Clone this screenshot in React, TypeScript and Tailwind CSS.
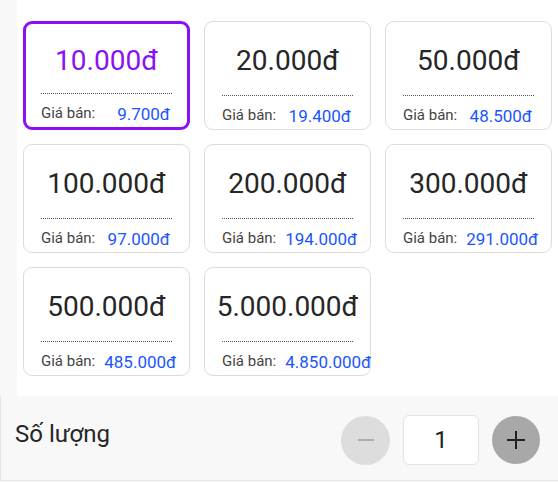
import React from "react";

const items = [
  { v: "10.000đ", p: "9.700đ", active: true },
  { v: "20.000đ", p: "19.400đ" },
  { v: "50.000đ", p: "48.500đ" },
  { v: "100.000đ", p: "97.000đ" },
  { v: "200.000đ", p: "194.000đ" },
  { v: "300.000đ", p: "291.000đ" },
  { v: "500.000đ", p: "485.000đ" },
  { v: "5.000.000đ", p: "4.850.000đ" },
];

export default function App() {
  return (
    <div
      className="w-[558px] h-[482px] bg-[#f8f8f8] flex flex-col overflow-hidden"
      style={{ fontFamily: "Roboto, 'Liberation Sans', sans-serif" }}
    >
      <div className="ml-[17px] bg-white h-[396px] pt-[21px] pl-[6px]">
        <div className="grid grid-cols-[167px_167px_167px] gap-x-[14px] gap-y-[14px]">
          {items.map((it) => (
            <div
              key={it.v}
              className={
                it.active
                  ? "h-[109px] rounded-[9px] border-[3px] border-[#8b10f5] px-[15px] flex flex-col"
                  : "h-[109px] rounded-[9px] border border-[#dcdcdc] px-[17px] flex flex-col"
              }
            >
              <div
                className={
                  (it.active ? "h-[70px] pt-[7px] text-[#8b10f5]" : "h-[72px] pt-[7px] text-[#262626]") +
                  " flex items-center justify-center text-[28px] leading-none"
                }
              >
                {it.v}
              </div>
              <div className="border-t border-dotted border-[#555] mt-[2px]" />
              <div className="flex justify-start items-center whitespace-nowrap mt-[5px]">
                <span className="text-[15px] text-[#444]">Giá bán:</span>
                <span className="ml-auto pl-[9px] text-[17px] text-[#1a55ff] pr-[2px] mt-[3px]">{it.p}</span>
              </div>
            </div>
          ))}
        </div>
      </div>
      <div className="flex-1 border-b border-l border-[#e6e6e6] flex items-center justify-between pl-[14px] pr-[18px] mb-[1px]">
        <span className="text-[24px] text-[#262626] -mt-[8px]">Số lượng</span>
        <div className="flex items-center gap-[13px] mt-[4px]">
          <div className="w-[49px] h-[49px] rounded-full bg-[#dddddd] flex items-center justify-center">
            <div className="w-[16px] h-[1.5px] bg-[#b0b0b0]" />
          </div>
          <div className="w-[76px] h-[50px] rounded-[6px] border border-[#e3e3e3] bg-white flex items-center justify-center text-[24px] text-[#222]">
            1
          </div>
          <div className="w-[48px] h-[48px] rounded-full bg-[#a8a8a8] flex items-center justify-center relative">
            <div className="w-[18px] h-[2px] bg-[#222] absolute" />
            <div className="w-[2px] h-[18px] bg-[#222] absolute" />
          </div>
        </div>
      </div>
    </div>
  );
}
